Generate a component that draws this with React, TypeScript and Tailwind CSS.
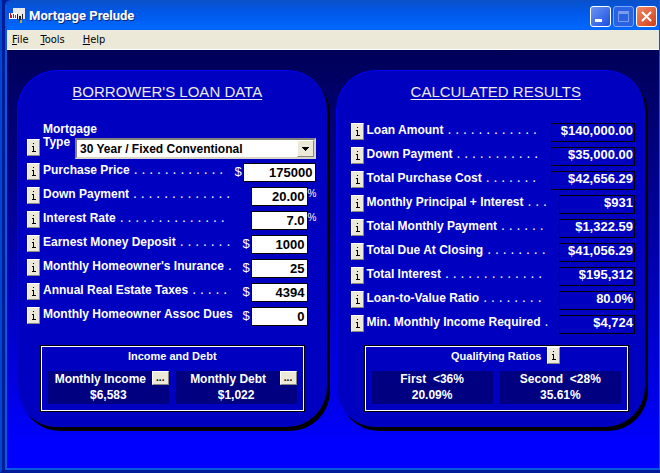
import { ReactNode, useState } from 'react'

const raised = 'bg-[#ece9d8] border border-t-white border-l-white border-r-[#8a887c] border-b-[#8a887c] text-black'

type Field = { id: string; label: string; dots: number; value: string; prefix?: string; suffix?: string; wide?: boolean }

const fields: Field[] = [
  { id: 'price', label: 'Purchase Price', dots: 12, value: '175000', prefix: '$', wide: true },
  { id: 'down', label: 'Down Payment', dots: 13, value: '20.00', suffix: '%' },
  { id: 'rate', label: 'Interest Rate', dots: 14, value: '7.0', suffix: '%' },
  { id: 'earnest', label: 'Earnest Money Deposit', dots: 7, value: '1000', prefix: '$' },
  { id: 'insurance', label: "Monthly Homeowner's Inurance", dots: 1, value: '25', prefix: '$' },
  { id: 'taxes', label: 'Annual Real Estate Taxes', dots: 5, value: '4394', prefix: '$' },
  { id: 'dues', label: 'Monthly Homeowner Assoc Dues', dots: 0, value: '0', prefix: '$' }
]

const results = [
  { label: 'Loan Amount', dots: 12, value: '$140,000.00', wide: true },
  { label: 'Down Payment', dots: 11, value: '$35,000.00', wide: true },
  { label: 'Total Purchase Cost', dots: 7, value: '$42,656.29', wide: true },
  { label: 'Monthly Principal + Interest', dots: 3, value: '$931' },
  { label: 'Total Monthly Payment', dots: 6, value: '$1,322.59' },
  { label: 'Total Due At Closing', dots: 8, value: '$41,056.29' },
  { label: 'Total Interest', dots: 13, value: '$195,312' },
  { label: 'Loan-to-Value Ratio', dots: 8, value: '80.0%' },
  { label: 'Min. Monthly Income Required', dots: 1, value: '$4,724' }
]

const InfoButton = ({ about }: { about: string }) => (
  <button aria-label={`About ${about}`} className={`${raised} flex h-[17px] w-[13px] shrink-0 items-center justify-center`}>
    <svg width="5" height="9" viewBox="0 0 5 9" shapeRendering="crispEdges" fill="currentColor">
      <path d="M2 0h1v1H2zM1 3h2v5H2V4H1zM1 8h4v1H1z" />
    </svg>
  </button>
)

const Dots = ({ count }: { count: number }) => (
  <span aria-hidden="true" className="ml-1 text-[14px] leading-[13px] font-normal">
    {Array(count).fill('.').join(' ')}
  </span>
)

type PanelProps = { title: string; titleClass: string; className: string; children: ReactNode }

const Panel = ({ title, titleClass, className, children }: PanelProps) => (
  <section className={`flex min-w-0 flex-col rounded-[40px] border-t border-l border-[#0000f0] bg-[#0000c0] pt-3 pb-4 shadow-[3px_4px_0_#000] ${className}`}>
    <h2 className={`mb-[22px] text-center text-[15px] leading-[18px] font-normal text-[#ececec] underline underline-offset-2 ${titleClass}`}>
      {title}
    </h2>
    {children}
  </section>
)

const Summary = ({ title, className, children }: { title: ReactNode; className: string; children: ReactNode }) => (
  <div className={`border border-white px-1.5 pb-1.5 outline outline-black ${className}`}>
    <div className="flex h-6 items-start justify-center gap-1.5 text-[11px] leading-[18px]">{title}</div>
    <div className="grid grid-cols-2 gap-[7px]">{children}</div>
  </div>
)

const Cell = ({ label, value, more }: { label: string; value: string; more?: boolean }) => (
  <div className="relative h-[33px] bg-[#000080] text-center leading-4">
    <div className={more ? 'pr-4' : 'whitespace-pre'}>{label}</div>
    <div>{value}</div>
    {more && (
      <button aria-label={`Edit ${label}`} className={`${raised} absolute top-0 right-0 h-[14px] w-[17px] text-[10px] leading-[10px]`}>...</button>
    )}
  </div>
)

const TitleBar = () => (
  <header className="flex h-[30px] items-center bg-linear-to-b from-[#0a50c8] via-[#0058e8] via-40% to-[#0068ff] pt-0.5 pr-0.5 pl-0.5">
    <svg width="17" height="16" viewBox="0 0 17 16" shapeRendering="crispEdges">
      <path d="M4 0h12v11H4z" fill="#e8e8e8" />
      <path d="M0 5h8v6H0z" fill="#fff" />
      <path d="M1 5h1v5H1zM2 7h1v3H2zM4 6h1v4H4zM6 7h1v3H6z" fill="#e01010" />
      <path d="M8 6h1v6H8zM10 8h2v5h-2zM13 6h1v5h-1z" fill="#222" />
      <path d="M11 12h2v3h-2z" fill="#b0b030" />
    </svg>
    <h1 className="ml-[3px] flex-1 font-[Roboto,sans-serif] text-[13px] font-bold text-white [text-shadow:1px_1px_0_#0a2a80]">Mortgage Prelude</h1>
    <div className="flex gap-[2px]">
      <button aria-label="Minimize" className="size-[21px] rounded-[3px] border border-white bg-linear-to-br from-[#6a94f4] to-[#1c4ce0]">
        <svg viewBox="0 0 19 19" fill="#fff"><path d="M4 12h7v3H4z" /></svg>
      </button>
      <button aria-label="Maximize" className="size-[21px] rounded-[3px] border border-[#7ea6f4] bg-[#2a62e4]">
        <svg viewBox="0 0 19 19" fill="none" stroke="#7c9cf0"><path d="M4.500 5.500h10v9h-10zM4 4.500h11M4 6.500h11" /></svg>
      </button>
      <button aria-label="Close" className="size-[21px] rounded-[3px] border border-white bg-linear-to-br from-[#f08868] to-[#d03c10]">
        <svg viewBox="0 0 19 19" stroke="#fff" strokeWidth="2"><path d="M5 5l9 9M14 5l-9 9" /></svg>
      </button>
    </div>
  </header>
)

export default function App() {
  const [values, setValues] = useState<Record<string, string>>(
    Object.fromEntries(fields.map((f) => [f.id, f.value]))
  )

  return (
    <div className="flex min-h-screen flex-col border-b-[3px] border-l-2 border-b-[#001c98] border-l-[#0048d0] bg-[#001c98] pl-[3px] font-['Liberation_Sans',Arial,sans-serif] text-[12px] font-bold text-white">
      <div className="flex flex-1 flex-col overflow-hidden rounded-tl-md border-r border-b-2 border-l-2 border-[#0858e0]">
        <TitleBar />

        <nav className="flex h-5 items-center gap-3 border-b border-white bg-[#ece9d8] px-[5px] pt-0.5 font-['DejaVu_Sans_Condensed','DejaVu_Sans',sans-serif] text-[11px] font-normal text-black">
          <button><u>F</u>ile</button>
          <button><u>T</u>ools</button>
          <button className="ml-1.5"><u>H</u>elp</button>
        </nav>

        <main className="flex-1 bg-linear-to-b from-[#000058] to-[#0000ff] to-95% pt-5 pr-3.5 pb-9 pl-2.5">
          <div className="grid grid-cols-2 gap-[9px]">
            <Panel title="BORROWER'S LOAN DATA" titleClass="pr-2" className="pr-[11px] pl-[9px]">
              <div className="mb-1 flex items-end">
                <div className="mr-[3px] mb-[3px]"><InfoButton about="Mortgage Type" /></div>
                <label htmlFor="type" className="w-8 self-start leading-[13px]">Mortgage Type</label>
                <div className="relative mt-[15px] flex-1">
                  <select id="type" className="block h-[21px] w-full appearance-none border-2 border-t-[#808080] border-l-[#808080] border-r-[#d8d4c8] border-b-[#d8d4c8] bg-white pl-[3px] text-[12px] font-bold text-black">
                    <option>30 Year / Fixed Conventional</option>
                  </select>
                  <span className={`${raised} pointer-events-none absolute top-[2px] right-[2px] flex h-[17px] w-[17px] items-center justify-center`}>
                    <svg width="7" height="4" viewBox="0 0 7 4" shapeRendering="crispEdges"><path d="M0 0h7L3.500 4z" /></svg>
                  </span>
                </div>
              </div>

              <div className="flex flex-col gap-[5px]">
                {fields.map((f) => (
                  <div key={f.id} className="flex h-[19px] items-start">
                    <InfoButton about={f.label} />
                    <label htmlFor={f.id} className="ml-[3px] flex-1 leading-[13px] whitespace-nowrap">
                      {f.label}
                      <Dots count={f.dots} />
                    </label>
                    <span className="w-2 text-[13px] leading-[17px] font-normal">{f.prefix}</span>
                    <input
                      id={f.id}
                      value={values[f.id]}
                      onChange={(e) => setValues({ ...values, [f.id]: e.target.value })}
                      className={`h-[19px] border border-black bg-white pr-[2px] text-right text-[13px] text-black ${f.wide ? 'w-[73px]' : 'w-[57px]'}`}
                    />
                    {!f.wide && <span className="w-2 text-[10px] leading-[14px] font-normal">{f.suffix}</span>}
                  </div>
                ))}
              </div>

              <Summary title="Income and Debt" className="mt-5 mr-3 ml-3.5">
                <Cell label="Monthly Income" value="$6,583" more />
                <Cell label="Monthly Debt" value="$1,022" more />
              </Summary>
            </Panel>

            <Panel title="CALCULATED RESULTS" titleClass="pl-1.5" className="pr-2.5 pl-3.5">
              <dl className="flex flex-col gap-[5px]">
                {results.map((r) => (
                  <div key={r.label} className="flex h-[19px] items-start">
                    <InfoButton about={r.label} />
                    <dt className="ml-[3px] flex-1 leading-[13px] whitespace-nowrap">
                      {r.label}
                      <Dots count={r.dots} />
                    </dt>
                    <dd className={`h-[19px] border border-black pr-px text-right text-[13px] leading-[13px] ${r.wide ? 'w-[84px]' : 'w-[76px]'}`}>{r.value}</dd>
                  </div>
                ))}
              </dl>

              <Summary
                title={<><span className="pl-[19px]">Qualifying Ratios</span><InfoButton about="Qualifying Ratios" /></>}
                className="mt-auto mr-[7px] ml-3.5"
              >
                <Cell label="First  <36%" value="20.09%" />
                <Cell label="Second  <28%" value="35.61%" />
              </Summary>
            </Panel>
          </div>
        </main>
      </div>
    </div>
  )
}
